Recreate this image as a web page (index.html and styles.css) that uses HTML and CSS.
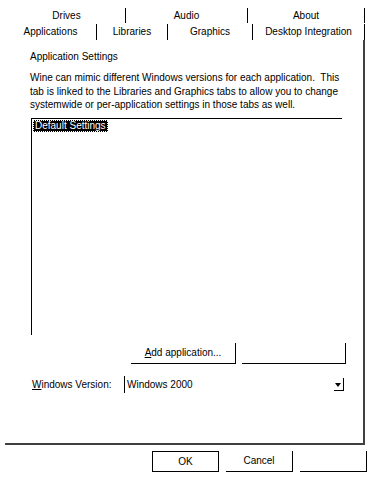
FILE: index.html
```html
<!DOCTYPE html>
<html>
<head>
<meta charset="utf-8">
<link rel="stylesheet" href="styles.css">
</head>
<body>
<div class="dialog">
  <div class="tabs">
    <div class="tabrow row1">
      <div class="tab t-drives">Drives</div>
      <div class="tab t-audio">Audio</div>
      <div class="tab t-about">About</div>
    </div>
    <div class="tabrow row2">
      <div class="tab t-apps">Applications</div>
      <div class="tab t-libs">Libraries</div>
      <div class="tab t-gfx">Graphics</div>
      <div class="tab t-desk">Desktop Integration</div>
    </div>
  </div>
  <div class="panel">
    <div class="title">Application Settings</div>
    <p class="desc">Wine can mimic different Windows versions for each application.&nbsp; This<br>tab is linked to the Libraries and Graphics tabs to allow you to change<br>systemwide or per-application settings in those tabs as well.</p>
    <div class="listbox">
      <div class="item selected">Default Settings</div>
    </div>
    <div class="btnrow">
      <div class="btn btn-add"><span class="ul">A</span>dd application...</div>
      <div class="btn btn-blank"></div>
    </div>
    <div class="verrow">
      <div class="verlabel"><span class="ul">W</span>indows Version:</div>
      <div class="combo">
        <span class="combotext">Windows 2000</span>
        <span class="arrow"></span>
      </div>
    </div>
  </div>
  <div class="footer">
    <div class="btn fbtn ok">OK</div>
    <div class="btn fbtn">Cancel</div>
    <div class="btn fbtn"></div>
  </div>
</div>
</body>
</html>
```
FILE: styles.css
```css
html, body {
  margin: 0;
  padding: 0;
  background: #fff;
}
body {
  width: 373px;
  height: 479px;
  overflow: hidden;
  font-family: "Liberation Sans", Arial, sans-serif;
  font-size: 10px;
  color: #000;
}
.dialog {
  display: flex;
  flex-direction: column;
}
.tabs {
  padding-top: 8px;
}
.tabrow {
  display: flex;
  height: 16px;
}
.tab {
  box-sizing: border-box;
  border-right: 1px solid #000;
  text-align: center;
  line-height: 15px;
  height: 15px;
}
.row1 {
  margin-left: 8px;
}
.row2 {
  margin-left: 5px;
  height: 16px;
}
.row2 .tab {
  height: 16px;
  line-height: 16px;
}
.t-drives { width: 118px; }
.t-audio { width: 122px; }
.t-about { width: 117px; }
.t-apps { width: 92px; }
.t-libs { width: 71px; }
.t-gfx { width: 85px; }
.t-desk { width: 112px; }

.panel {
  margin-left: 5px;
  width: 360px;
  height: 405px;
  box-sizing: border-box;
  border-right: 2px solid #404040;
  border-bottom: 2px solid #404040;
  padding-left: 25px;
  padding-top: 10px;
}
.title {
  line-height: 13px;
}
.desc {
  margin: 8px 0 0 0;
  white-space: nowrap;
  line-height: 13.5px;
}
.listbox {
  margin-top: 6px;
  margin-left: 1px;
  width: 311px;
  height: 217px;
  box-sizing: border-box;
  border-top: 1px solid #000;
  border-left: 1px solid #000;
  padding: 1px 0 0 1px;
}
.item {
  display: inline-block;
  line-height: 12px;
  padding: 0 2px;
}
.selected {
  background: #000;
  color: #fff;
  outline: 1px dotted #fff;
  outline-offset: -1px;
}
.btnrow {
  display: flex;
  gap: 6px;
  margin-left: 101px;
  margin-top: 8px;
}
.btn {
  box-sizing: border-box;
  border-right: 1px solid #000;
  border-bottom: 1px solid #000;
  text-align: center;
}
.btn-add {
  width: 105px;
  height: 21px;
  line-height: 20px;
}
.btn-blank {
  width: 104px;
  height: 21px;
}
.ul {
  text-decoration: underline;
}
.verrow {
  display: flex;
  align-items: center;
  margin-top: 12px;
  height: 17px;
}
.verlabel {
  width: 92px;
  padding-left: 2px;
}
.combo {
  width: 222px;
  height: 17px;
  box-sizing: border-box;
  border-left: 1px solid #000;
  display: flex;
  align-items: center;
  padding-left: 2px;
}
.combotext {
  flex: 1;
}
.arrow {
  width: 10px;
  height: 13px;
  box-sizing: border-box;
  border-right: 1px solid #000;
  border-bottom: 1px solid #000;
  margin-right: 2px;
  position: relative;
}
.arrow::after {
  content: "";
  position: absolute;
  left: 1px;
  top: 5px;
  border-left: 3.5px solid transparent;
  border-right: 3.5px solid transparent;
  border-top: 4px solid #000;
}
.footer {
  display: flex;
  gap: 7px;
  margin-left: 152px;
  margin-top: 6px;
}
.fbtn {
  width: 67px;
  height: 21px;
  line-height: 20px;
}
.ok {
  border: 1px solid #000;
}
```
